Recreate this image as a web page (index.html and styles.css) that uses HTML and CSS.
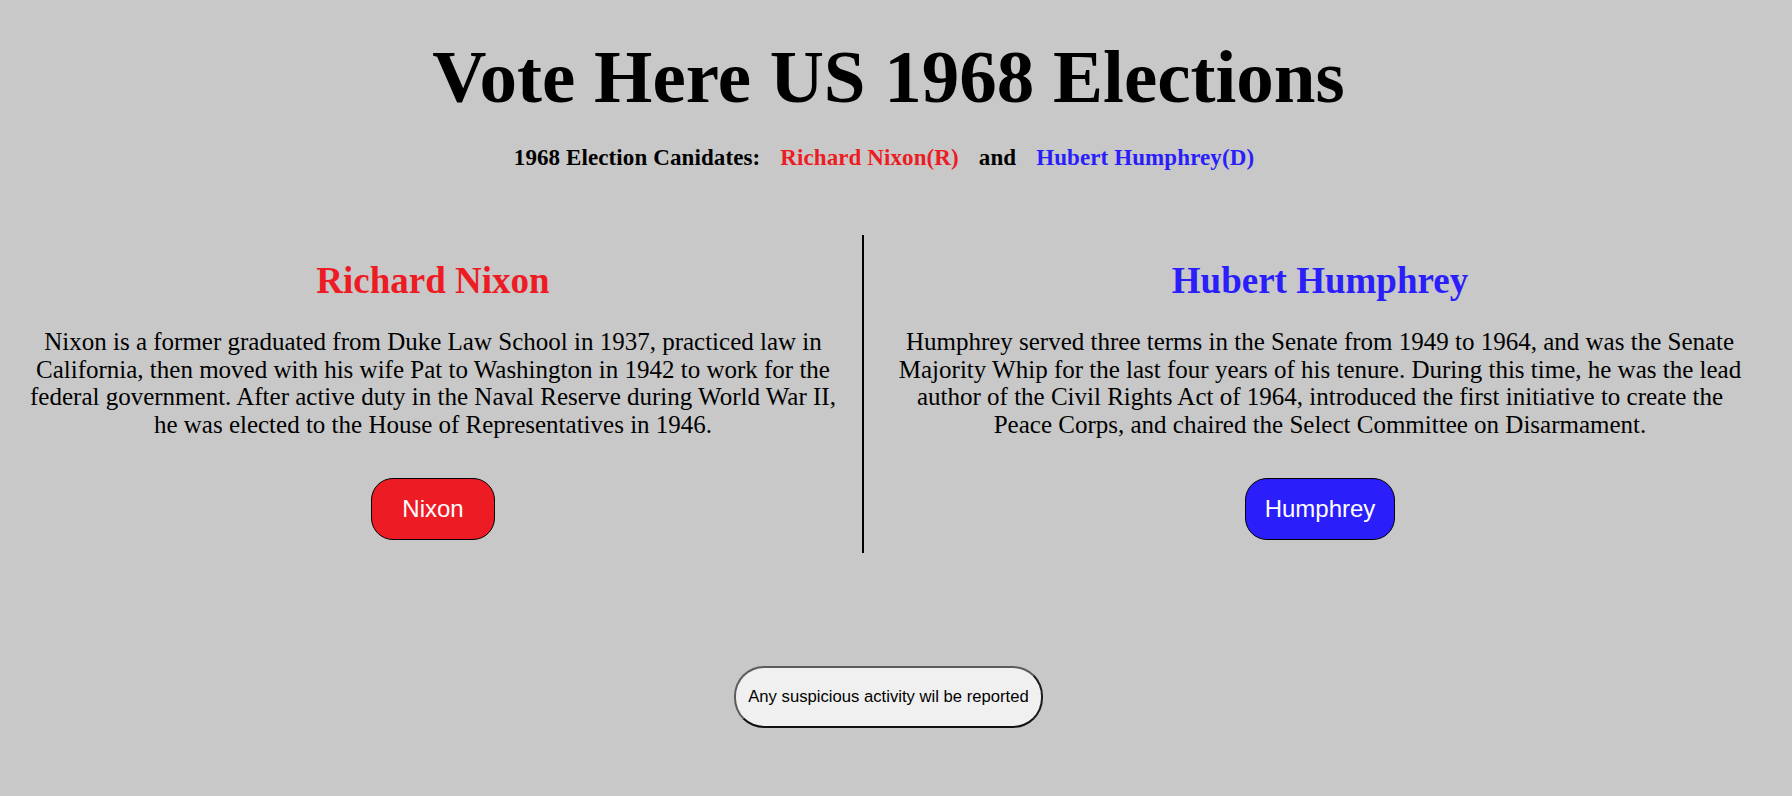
FILE: index.html
```html
<!DOCTYPE html>
<html lang="en">
<head>
<meta charset="utf-8">
<title>Vote Here US 1968 Elections</title>
<link rel="stylesheet" href="styles.css">
</head>
<body>
<div class="page">
  <h1 class="title">Vote Here US 1968 Elections</h1>
  <div class="subtitle">
    <span class="label">1968 Election Canidates:</span>
    <span class="red">Richard Nixon(R)</span>
    <span class="label">and</span>
    <span class="blue">Hubert Humphrey(D)</span>
  </div>
  <div class="columns">
    <section class="col col-left">
      <h2 class="name red">Richard Nixon</h2>
      <p class="bio">Nixon is a former graduated from Duke Law School in 1937, practiced law in California, then moved with his wife Pat to Washington in 1942 to work for the federal government. After active duty in the Naval Reserve during World War II, he was elected to the House of Representatives in 1946.</p>
      <button class="vote vote-nixon">Nixon</button>
    </section>
    <section class="col col-right">
      <h2 class="name blue">Hubert Humphrey</h2>
      <p class="bio">Humphrey served three terms in the Senate from 1949 to 1964, and was the Senate Majority Whip for the last four years of his tenure. During this time, he was the lead author of the Civil Rights Act of 1964, introduced the first initiative to create the Peace Corps, and chaired the Select Committee on Disarmament.</p>
      <button class="vote vote-humphrey">Humphrey</button>
    </section>
  </div>
  <div class="footer">
    <button class="notice">Any suspicious activity wil be reported</button>
  </div>
</div>
</body>
</html>
```
FILE: styles.css
```css
html, body {
  margin: 0;
  padding: 0;
  background: #c8c8c8;
}
body {
  font-family: "Liberation Serif", "Times New Roman", serif;
  color: #000;
}
.page {
  padding: 34px 23px 0 8px;
}
.title {
  margin: 0;
  text-align: center;
  font-size: 75px;
  font-weight: bold;
  line-height: normal;
}
.subtitle {
  margin-top: 25px;
  padding-right: 9px;
  display: flex;
  justify-content: center;
  gap: 20px;
  font-size: 23px;
  font-weight: bold;
  letter-spacing: 0.1px;
}
.red { color: #ed1c24; }
.blue { color: #2a1efa; }
.columns {
  margin-top: 64px;
  display: flex;
}
.col {
  display: flex;
  flex-direction: column;
  align-items: center;
  text-align: center;
  padding-top: 24px;
  padding-bottom: 13px;
}
.col-left {
  width: 854px;
  padding-left: 16px;
  padding-right: 20px;
  box-sizing: border-box;
}
.col-right {
  flex: 1;
  border-left: 2px solid #000;
  padding-left: 26px;
  padding-right: 19px;
}
.name {
  margin: 0;
  font-size: 37px;
  font-weight: bold;
}
.bio {
  margin: 26px 0 0;
  font-size: 25px;
  line-height: 27.7px;
}
.vote {
  margin-top: 39px;
  font-family: "Liberation Sans", Arial, sans-serif;
  font-size: 24px;
  color: #fff;
  border: 1px solid #000;
  border-radius: 22px;
  line-height: normal;
  cursor: pointer;
}
.vote-nixon { background: #ed1c24; padding: 16px 30px; }
.vote-humphrey { background: #2a1efa; padding: 16px 19px; }
.footer {
  margin-top: 113px;
  display: flex;
  justify-content: center;
}
.notice {
  font-family: "Liberation Sans", Arial, sans-serif;
  font-size: 16.67px;
  color: #000;
  background: #f0f0f0;
  border: 2px solid;
  border-color: #5c5c5c #1a1a1a #111 #5c5c5c;
  border-radius: 30px;
  padding: 19px 12px;
  line-height: normal;
}
```
